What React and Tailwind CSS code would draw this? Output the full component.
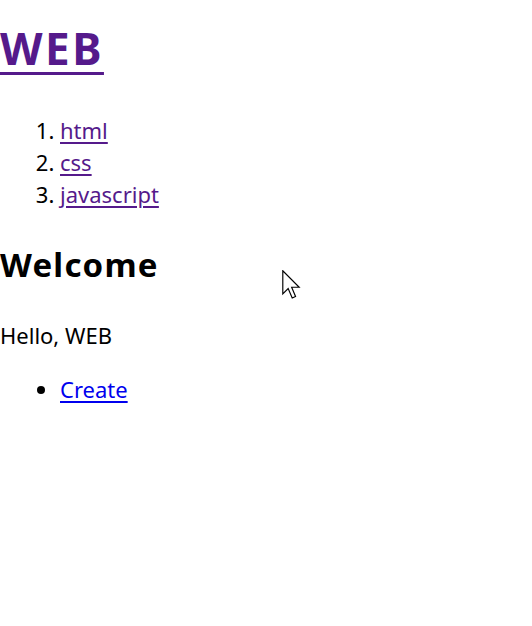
export default function App() {
  return (
    <div className="relative min-h-[626px] w-[532px] overflow-hidden bg-white font-['Noto_Sans',sans-serif] text-[22px] leading-[32px] text-black">
      <h1 className="pt-[24px] text-[44px] font-bold leading-[48px] tracking-[2.5px]">
        <a href="#" className="text-[#551a8b] underline decoration-[3px] underline-offset-[7px]">
          WEB
        </a>
      </h1>

      <ol className="mt-[42px] list-decimal pl-[60px]">
        <li>
          <a href="#" className="text-[#551a8b] underline decoration-2 underline-offset-[3px]">html</a>
        </li>
        <li>
          <a href="#" className="text-[#551a8b] underline decoration-2 underline-offset-[3px]">css</a>
        </li>
        <li>
          <a href="#" className="text-[#551a8b] underline decoration-2 underline-offset-[3px]">javascript</a>
        </li>
      </ol>

      <h2 className="mt-[35px] text-[33px] font-bold leading-[40px] tracking-[1.2px]">Welcome</h2>

      <p className="mt-[34px]">Hello, WEB</p>

      <ul className="mt-[22px] list-disc pl-[60px]">
        <li>
          <a href="#" className="text-[#0000ee] underline decoration-2 underline-offset-[3px]">Create</a>
        </li>
      </ul>

      {/* mouse pointer resting over the page */}
      <svg
        className="absolute left-[282px] top-[270px]"
        width="19"
        height="29"
        viewBox="0 0 13 20"
      >
        <path
          d="M0.5 0.5 L0.5 16.5 L4.2 12.8 L7 19.3 L9.3 18.3 L6.6 11.9 L11.8 11.9 Z"
          fill="white"
          stroke="black"
          strokeWidth="0.8"
          strokeLinejoin="miter"
        />
      </svg>
    </div>
  );
}
